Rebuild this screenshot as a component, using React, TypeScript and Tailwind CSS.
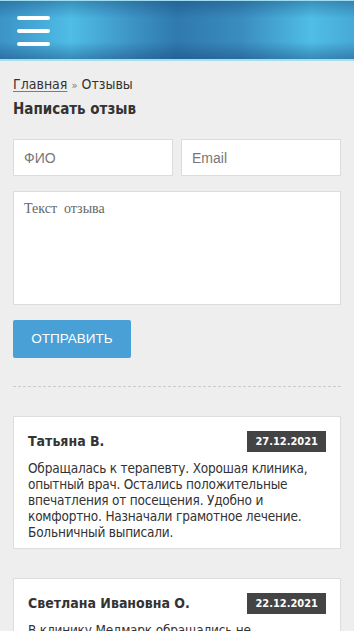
import { useState } from "react";

interface Review {
  name: string;
  date: string;
  text: string;
}

const reviews: Review[] = [
  {
    name: "Татьяна В.",
    date: "27.12.2021",
    text: "Обращалась к терапевту. Хорошая клиника, опытный врач. Остались положительные впечатления от посещения. Удобно и комфортно. Назначали грамотное лечение. Больничный выписали.",
  },
  {
    name: "Светлана Ивановна О.",
    date: "22.12.2021",
    text: "В клинику Медмарк обращались не однократно. Всё понравилось, врачи внимательные.",
  },
];

export default function App() {
  const [fio, setFio] = useState("");
  const [email, setEmail] = useState("");
  const [text, setText] = useState("");

  return (
    <div className="min-h-screen bg-[#eeeeee] font-['Liberation_Sans',Arial,sans-serif] text-[#333]">
      {/* Header */}
      <div className="relative h-[61px] border-t border-b-2 border-t-[#9fdcec] border-b-[#a6dfea] bg-[linear-gradient(180deg,rgba(20,60,110,0.35)_0%,rgba(0,0,0,0)_30%,rgba(0,0,0,0)_70%,rgba(20,60,110,0.4)_100%),linear-gradient(90deg,#3b93c6_0%,#4fbde6_20%,#3c92c4_38%,#2f79ad_50%,#3a8cbf_68%,#4fbee6_88%,#47a9d6_100%)]">
        <button className="absolute left-[17px] top-[15px] flex flex-col gap-[9px]">
          <span className="block h-[4px] w-[33px] rounded-full bg-white" />
          <span className="block h-[4px] w-[33px] rounded-full bg-white" />
          <span className="block h-[4px] w-[33px] rounded-full bg-white" />
        </button>
      </div>

      <div className="px-[13px]">
        {/* Breadcrumbs */}
        <div className="pt-[13px] text-[14px] leading-[20px] font-['DejaVu_Sans_Condensed',sans-serif] text-[#333]">
          <a className="underline decoration-[#3a8ed0] underline-offset-2">Главная</a>
          <span className="mx-[4px] text-[11px] text-[#777]">»</span>
          <span>Отзывы</span>
        </div>
        <h2 className="mt-[3px] text-[15px] font-bold leading-[20px] font-['DejaVu_Sans_Condensed',sans-serif] text-[#333]">
          Написать отзыв
        </h2>

        {/* Form */}
        <div className="mt-[20px] grid grid-cols-2 gap-[8px]">
          <input
            value={fio}
            onChange={(e) => setFio(e.target.value)}
            placeholder="ФИО"
            className="h-[37px] border border-[#dcdcdc] bg-white px-[10px] text-[14px] text-[#333] outline-none placeholder:text-[#777]"
          />
          <input
            value={email}
            onChange={(e) => setEmail(e.target.value)}
            placeholder="Email"
            className="h-[37px] border border-[#dcdcdc] bg-white px-[10px] text-[14px] text-[#333] outline-none placeholder:text-[#777]"
          />
        </div>
        <textarea
          value={text}
          onChange={(e) => setText(e.target.value)}
          placeholder="Текст  отзыва"
          className="mt-[15px] block h-[114px] w-full resize-none whitespace-pre-wrap border border-[#dcdcdc] bg-white px-[10px] py-[6px] font-['Liberation_Serif',serif] text-[14px] text-[#333] outline-none placeholder:text-[#666]"
        />
        <button className="mt-[15px] h-[38px] w-[118px] rounded-[2px] bg-[#48a0d6] text-[13.5px] text-white">
          ОТПРАВИТЬ
        </button>

        <div className="mt-[28px] border-t border-dashed border-[#cccccc]" />

        {/* Reviews */}
        <div className="mt-[29px] flex flex-col gap-[29px] pb-[30px] font-['DejaVu_Sans_Condensed',sans-serif]">
          {reviews.map((r) => (
            <div key={r.date} className="border border-[#dddddd] bg-white px-[14px] pt-[14px] pb-[8px]">
              <div className="flex items-center justify-between">
                <span className="text-[14px] font-bold text-[#333]">{r.name}</span>
                <span className="bg-[#444444] px-[8px] py-[2px] text-[11px] font-bold leading-[17px] text-white">
                  {r.date}
                </span>
              </div>
              <p className="mt-[8px] text-[13.5px] leading-[16px] tracking-[-0.2px] text-[#333]">{r.text}</p>
            </div>
          ))}
        </div>
      </div>
    </div>
  );
}
